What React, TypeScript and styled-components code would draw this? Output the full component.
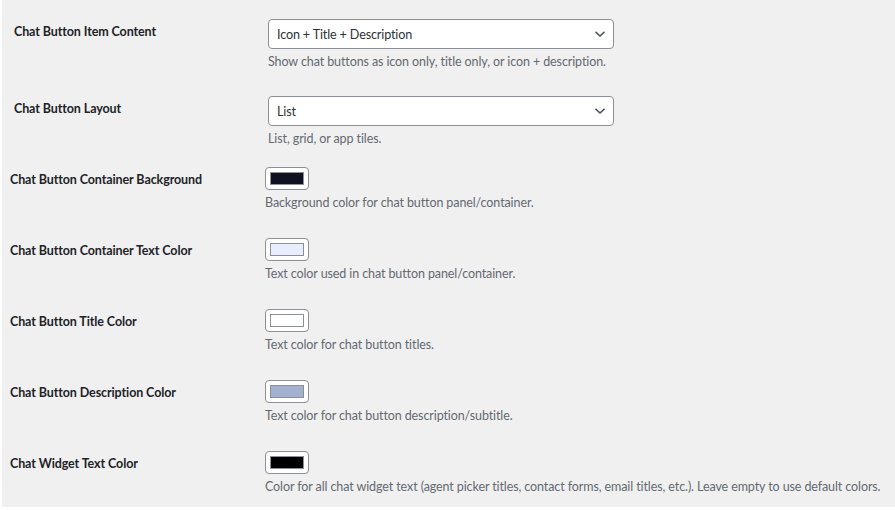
import React from 'react'
import styled, { createGlobalStyle } from 'styled-components'

const GlobalStyle = createGlobalStyle`
    html, body {
        margin: 0;
        padding: 0;
        background: #ffffff;
    }
    body {
        font-family: Lato, 'Noto Sans', sans-serif;
        color: #1d2327;
    }
`

const Panel = styled.div`
    margin-left: 2px;
    background: #f0f0f1;
    padding-top: 4px;
`

const SelectRow = styled.div`
    display: grid;
    grid-template-columns: 254px 346px;
    padding: 15px 0 10px 12px;
`

const ColorRow = styled.div`
    display: grid;
    grid-template-columns: 255px auto;
    padding: 9px 0 17px 8px;

    &:last-child {
        padding-bottom: 11px;
    }
`

const Label = styled.div`
    margin-top: 3px;
    font-size: 12.5px;
    letter-spacing: -0.1px;
    line-height: 20px;
    font-weight: 700;
    color: #1d2327;
`

const Field = styled.div`
    display: flex;
    flex-direction: column;
    align-items: flex-start;
`

const SelectBox = styled.div`
    box-sizing: border-box;
    width: 100%;
    height: 30px;
    display: flex;
    align-items: center;
    justify-content: space-between;
    padding: 0 7px 0 8px;
    background: #ffffff;
    border: 1px solid #8c8f94;
    border-radius: 4px;
    font-size: 12.6px;
    letter-spacing: -0.15px;
    color: #2c3338;
`

const Chevron = styled.svg`
    width: 12px;
    height: 8px;
`

const SwatchButton = styled.div`
    box-sizing: border-box;
    width: 44px;
    height: 23px;
    padding: 4px;
    background: #ffffff;
    border: 1px solid #8c8f94;
    border-radius: 4px;
`

const SwatchFill = styled.div<{ $color: string }>`
    box-sizing: border-box;
    width: 100%;
    height: 100%;
    background: ${p => p.$color};
    border: 1px solid #8c8f94;
`

const Description = styled.p<{ $gap: number }>`
    margin: ${p => p.$gap}px 0 0;
    font-size: 12.5px;
    letter-spacing: -0.1px;
    line-height: 18px;
    color: #646970;
    white-space: nowrap;
`

const selects = [
    { label: 'Chat Button Item Content', value: 'Icon + Title + Description', desc: 'Show chat buttons as icon only, title only, or icon + description.' },
    { label: 'Chat Button Layout', value: 'List', desc: 'List, grid, or app tiles.' },
]

const colors = [
    { label: 'Chat Button Container Background', color: '#0f1220', desc: 'Background color for chat button panel/container.' },
    { label: 'Chat Button Container Text Color', color: '#e8eeff', desc: 'Text color used in chat button panel/container.' },
    { label: 'Chat Button Title Color', color: '#ffffff', desc: 'Text color for chat button titles.' },
    { label: 'Chat Button Description Color', color: '#a3b1d1', desc: 'Text color for chat button description/subtitle.' },
    { label: 'Chat Widget Text Color', color: '#000000', desc: 'Color for all chat widget text (agent picker titles, contact forms, email titles, etc.). Leave empty to use default colors.' },
]

export default function App() {
    return (
        <>
            <GlobalStyle />
            <Panel>
                {selects.map(s => (
                    <SelectRow key={s.label}>
                        <Label>{s.label}</Label>
                        <Field>
                            <SelectBox>
                                <span>{s.value}</span>
                                <Chevron viewBox="0 0 12 8">
                                    <path d="M1.5 1.8 L6 6 L10.5 1.8" fill="none" stroke="#50575e" strokeWidth="1.6" />
                                </Chevron>
                            </SelectBox>
                            <Description $gap={4}>{s.desc}</Description>
                        </Field>
                    </SelectRow>
                ))}
                {colors.map(c => (
                    <ColorRow key={c.label}>
                        <Label>{c.label}</Label>
                        <Field>
                            <SwatchButton>
                                <SwatchFill $color={c.color} />
                            </SwatchButton>
                            <Description $gap={4}>{c.desc}</Description>
                        </Field>
                    </ColorRow>
                ))}
            </Panel>
        </>
    )
}
